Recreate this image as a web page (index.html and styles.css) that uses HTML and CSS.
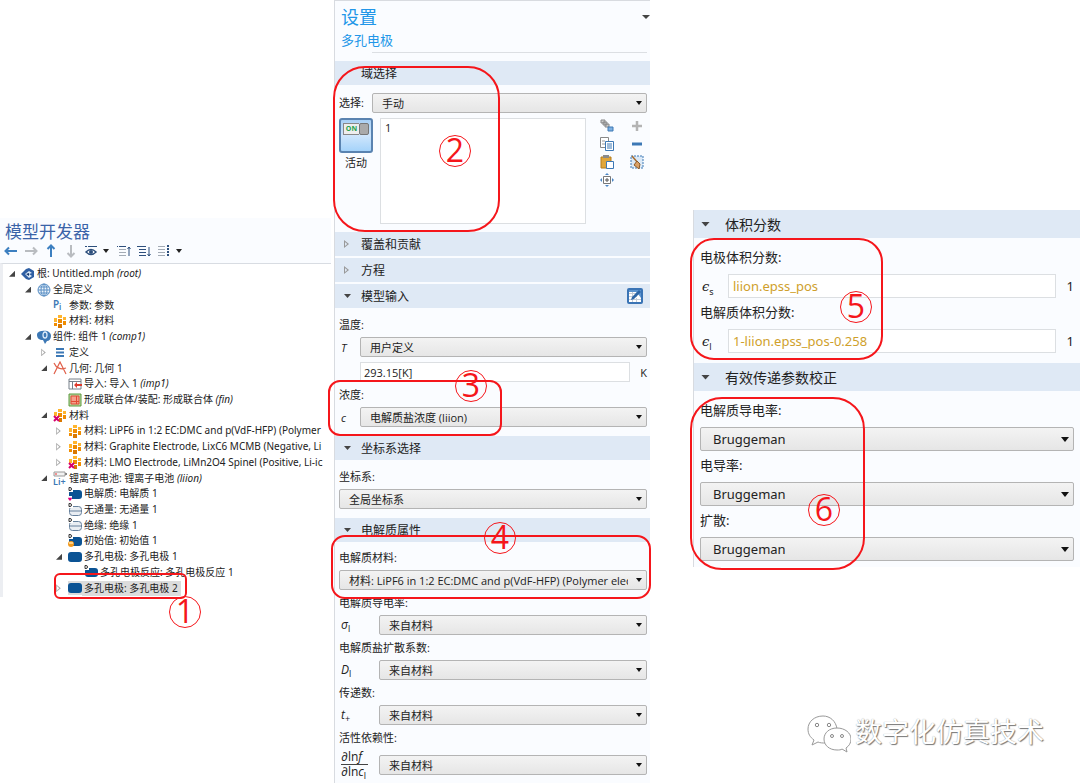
FILE: index.html
```
<!DOCTYPE html>
<html lang="zh-CN">
<head>
  <meta charset="UTF-8" />
  <meta name="viewport" content="width=device-width, initial-scale=1.0"/>
  <title>多孔电极 - 模型开发器</title>
  <link rel="stylesheet" href="styles.css">
</head>
<body>
  <!-- icon definitions -->
  <svg class="defs" aria-hidden="true">
    <symbol id="i-root" viewBox="0 0 14 14">
      <path d="M0 7L5 2l3-1 5 3v6l-5 3-3-1z" fill="#2f5fa3"/>
      <path d="M4 7l4-3 3 2-3 1 3 2-3 2z" fill="#dbe9f7"/>
      <path d="M5 7l3-1v3z" fill="#17386e"/>
    </symbol>
    <symbol id="i-globe" viewBox="0 0 14 14">
      <g fill="none" stroke="#5b8fc4" stroke-width="1">
        <circle cx="7" cy="7" r="6" fill="#eef5fc"/>
        <ellipse cx="7" cy="7" rx="3" ry="6"/>
        <path d="M7 1v12M1 7h12M2 4h10M2 10h10"/>
      </g>
    </symbol>
    <symbol id="i-param" viewBox="0 0 14 14">
      <text x="0" y="10" font-size="10" font-weight="600" fill="#3c78b5">P</text>
      <text x="6" y="12" font-size="8" font-weight="600" fill="#3c78b5">i</text>
    </symbol>
    <symbol id="i-mat" viewBox="0 0 14 14">
      <path d="M5 1h4v3H5zM1 4h3v4H1zM10 3h3v3h-3z" fill="#ffb52e"/>
      <path d="M5 5h4v4H5zM10 7h3v4h-3zM1 9h3v3H1z" fill="#f08c00"/>
      <path d="M5 10h4v4H5z" fill="#d97800"/>
    </symbol>
    <symbol id="i-matx" viewBox="0 0 14 14">
      <use href="#i-mat"/>
      <path d="M0 8h6v6H0z" fill="#fff"/>
      <path d="M1 8l5 5M6 8l-5 5" stroke="#d6006c" stroke-width="2"/>
    </symbol>
    <symbol id="i-comp" viewBox="0 0 14 14">
      <path d="M0 5c0-3 3-4 5-4 5-1 9 1 9 5 0 3-2 5-4 5l-2 3-2-4C2 10 0 8 0 5z" fill="#3c78b5"/>
      <ellipse cx="8" cy="5" rx="2" ry="3" fill="none" stroke="#dcebfa" stroke-width="1.3"/>
    </symbol>
    <symbol id="i-def" viewBox="0 0 14 14">
      <path d="M3 4h8M3 7.500h8M3 11h8" stroke="#3c78b5" stroke-width="2"/>
    </symbol>
    <symbol id="i-geom" viewBox="0 0 14 14">
      <path d="M1 2c2 5 7 7 12 5M1 13L7 1l6 12" fill="none" stroke="#e0604a" stroke-width="1.200"/>
    </symbol>
    <symbol id="i-import" viewBox="0 0 14 14">
      <path d="M1 2h12v10H1zM1 4.500h12M4.500 4v8" fill="#fff" stroke="#77808a"/>
      <path d="M6 8l3-3v2h5v2H9v2z" fill="#df3b2d"/>
    </symbol>
    <symbol id="i-union" viewBox="0 0 14 14">
      <path d="M1 1h12v12H1z" fill="#b9d7a2" stroke="#5e9a3f"/>
      <path d="M3 3h8v8H3z" fill="#f5a08c" stroke="#e24b36"/>
      <path d="M3 8.500h8M8.500 3v8" stroke="#e24b36"/>
    </symbol>
    <symbol id="i-li" viewBox="0 0 14 14">
      <path d="M1 1h11v4H1z" fill="#f2f2f2" stroke="#9a9a9a"/>
      <path d="M12 2h2v2h-2z" fill="#888"/>
      <path d="M2 3h2" stroke="#e33"/>
      <text x="0" y="14" font-size="9" font-weight="600" fill="#3c78b5">Li+</text>
    </symbol>
    <symbol id="i-dom" viewBox="0 0 14 14">
      <rect x="0" y="2" width="14" height="10" rx="3" fill="#0b5394"/>
    </symbol>
    <symbol id="i-domd" viewBox="0 0 14 14">
      <rect x="1" y="3" width="13" height="9" rx="3" fill="#0b5394"/>
      <path d="M0 0h5v5H0z" fill="#fff"/>
      <path d="M1 .500h1q1.500 0 1.500 1.500T2 3.500H1z" fill="none" stroke="#333"/>
    </symbol>
    <symbol id="i-domel" viewBox="0 0 14 14">
      <use href="#i-domd"/>
      <path d="M0 9h4v5H0z" fill="#fff"/>
      <path d="M0 11q1-1 2 0 1-1 2 0 0 1-2 3-2-2-2-3z" fill="#e0007a"/>
    </symbol>
    <symbol id="i-domin" viewBox="0 0 14 14">
      <use href="#i-domd"/>
      <circle cx="3" cy="10" r="3" fill="#f29a1f"/>
      <path d="M1 8h4v2H1z" fill="#ffd083"/>
    </symbol>
    <symbol id="i-bnd" viewBox="0 0 14 14">
      <rect x="1.500" y="3.500" width="12" height="9" rx="3" fill="#e9edf2" stroke="#66809c"/>
      <path d="M2 8h11" stroke="#66809c"/>
      <path d="M0 0h5v5H0z" fill="#fff"/>
      <path d="M1 .500h1q1.500 0 1.500 1.500T2 3.500H1z" fill="none" stroke="#333"/>
    </symbol>
    <symbol id="i-arrow" viewBox="0 0 14 14">
      <path d="M1 7h12M5 3.500L1.500 7 5 10.500" fill="none" stroke="currentColor" stroke-width="2"/>
    </symbol>
  </svg>

  <main class="board">
    <div class="col col-tree">
      <section class="builder">
        <h1>模型开发器</h1>
        <div class="toolbar">
          <button type="button" aria-label="后退"><svg class="blue"><use href="#i-arrow"/></svg></button>
          <button type="button" aria-label="前进"><svg class="grey flip"><use href="#i-arrow"/></svg></button>
          <button type="button" aria-label="上移"><svg class="blue up"><use href="#i-arrow"/></svg></button>
          <button type="button" aria-label="下移"><svg class="grey down"><use href="#i-arrow"/></svg></button>
          <button type="button" class="drop" aria-label="显示">
            <svg viewBox="0 0 14 14"><path d="M1 2.500h2M4 2.500h9" stroke="#2d4f7c"/><path d="M2 8q5-5 10 0-5 5-10 0z" fill="#fff" stroke="#2d4f7c" stroke-width="1.500"/><circle cx="7" cy="8" r="2" fill="#2d4f7c"/></svg>
          </button>
          <button type="button" aria-label="全部折叠">
            <svg viewBox="0 0 14 14"><path d="M0 2.500h9" stroke="#2d4f7c" stroke-dasharray="1 1 7"/><path d="M2 5.500h7M2 8.500h7M2 11.500h7" stroke="#a3abb5"/><path d="M12 12V3M10.500 5L12 3l1.500 2" fill="none" stroke="#2d4f7c"/></svg>
          </button>
          <button type="button" aria-label="全部展开">
            <svg viewBox="0 0 14 14"><path d="M0 2.500h9M2 5.500h7M2 8.500h7M2 11.500h7" stroke="#2d4f7c"/><path d="M12 3v9M10.500 10l1.500 2 1.500-2" fill="none" stroke="#2d4f7c"/></svg>
          </button>
          <button type="button" class="drop" aria-label="节点文本">
            <svg viewBox="0 0 14 14"><path d="M1 2.500h7M1 5.500h7M1 8.500h7M1 11.500h7" stroke="#a3abb5"/><path d="M11 1v12" stroke="#2d4f7c" stroke-width="2" stroke-dasharray="2 1"/></svg>
          </button>
        </div>
        <ul class="tree">
          <li class="l0 open"><svg><use href="#i-root"/></svg><span>根: Untitled.mph <i>(root)</i></span></li>
          <li class="l1 open"><svg><use href="#i-globe"/></svg><span>全局定义</span></li>
          <li class="l2"><svg><use href="#i-param"/></svg><span>参数: 参数</span></li>
          <li class="l2"><svg><use href="#i-mat"/></svg><span>材料: 材料</span></li>
          <li class="l1 open"><svg><use href="#i-comp"/></svg><span>组件: 组件 1 <i>(comp1)</i></span></li>
          <li class="l2 shut"><svg><use href="#i-def"/></svg><span>定义</span></li>
          <li class="l2 open"><svg><use href="#i-geom"/></svg><span>几何: 几何 1</span></li>
          <li class="l3"><svg><use href="#i-import"/></svg><span>导入: 导入 1 <i>(imp1)</i></span></li>
          <li class="l3"><svg><use href="#i-union"/></svg><span>形成联合体/装配: 形成联合体 <i>(fin)</i></span></li>
          <li class="l2 open"><svg><use href="#i-matx"/></svg><span>材料</span></li>
          <li class="l3 shut"><svg><use href="#i-mat"/></svg><span>材料: LiPF6 in 1:2 EC:DMC and p(VdF-HFP) (Polymer</span></li>
          <li class="l3 shut"><svg><use href="#i-mat"/></svg><span>材料: Graphite Electrode, LixC6 MCMB (Negative, Li</span></li>
          <li class="l3 shut"><svg><use href="#i-matx"/></svg><span>材料: LMO Electrode, LiMn2O4 Spinel (Positive, Li-ic</span></li>
          <li class="l2 open"><svg><use href="#i-li"/></svg><span>锂离子电池: 锂离子电池 <i>(liion)</i></span></li>
          <li class="l3"><svg><use href="#i-domel"/></svg><span>电解质: 电解质 1</span></li>
          <li class="l3"><svg><use href="#i-bnd"/></svg><span>无通量: 无通量 1</span></li>
          <li class="l3"><svg><use href="#i-bnd"/></svg><span>绝缘: 绝缘 1</span></li>
          <li class="l3"><svg><use href="#i-domin"/></svg><span>初始值: 初始值 1</span></li>
          <li class="l3 open"><svg><use href="#i-dom"/></svg><span>多孔电极: 多孔电极 1</span></li>
          <li class="l4"><svg><use href="#i-domd"/></svg><span>多孔电极反应: 多孔电极反应 1</span></li>
          <li class="l3 shut selected"><svg><use href="#i-dom"/></svg><span>多孔电极: 多孔电极 2</span></li>
        </ul>
      </section>
      <div class="mark mark1"></div>
      <div class="num num1">1</div>
    </div>

    <div class="col col-settings">
      <section class="settings">
        <header>
          <h2>设置</h2>
          <p>多孔电极</p>
        </header>

        <h3>域选择</h3>
        <div class="domain">
          <label for="sel">选择:</label>
          <select id="sel"><option>手动</option></select>
          <div class="active">
            <button type="button" id="on" aria-label="活动"><span>ON</span><b></b></button>
            <label for="on">活动</label>
          </div>
          <textarea aria-label="域">1</textarea>
          <div class="tools">
            <button type="button" aria-label="创建选择"><svg viewBox="0 0 14 14"><path d="M1 1h4v3H1zM3 3h4v3H3zM5 5h4v3H5z" fill="#ccc" stroke="#888"/><path d="M8 8h5v4H8z" fill="#7fb0e0" stroke="#3c78b5"/></svg></button>
            <button type="button" aria-label="添加"><svg viewBox="0 0 14 14"><path d="M7 2v10M2 7h10" stroke="#b4b4b4" stroke-width="2.500"/></svg></button>
            <button type="button" aria-label="复制"><svg viewBox="0 0 14 14"><path d="M.5.500h8v10h-8z" fill="#fff" stroke="#888"/><path d="M2 4h3M2 7h3" stroke="#999"/><path d="M5.500 4.500h8v9h-8z" fill="#fff" stroke="#3c78b5"/><path d="M7 7h5M7 9h5M7 11h5" stroke="#3c78b5"/></svg></button>
            <button type="button" aria-label="移除"><svg viewBox="0 0 14 14"><path d="M2 7h10" stroke="#3c78b5" stroke-width="3"/></svg></button>
            <button type="button" aria-label="粘贴"><svg viewBox="0 0 14 14"><path d="M1 2h10v11H1z" fill="#e0a63a" stroke="#b57d1c"/><path d="M3 0h6v3H3z" fill="#8a8a8a"/><path d="M6.500 6.500h7v7h-7z" fill="#fff" stroke="#3c78b5"/></svg></button>
            <button type="button" aria-label="清除选择"><svg viewBox="0 0 14 14"><path d="M1 1h12v12H1z" fill="#dbe9f7" stroke="#3c78b5" stroke-dasharray="2 1"/><path d="M2 1l6 7" stroke="#a66b2e" stroke-width="1.500"/><path d="M7 6l3 3-1 5-5-4z" fill="#d9a066" stroke="#8d5a28"/></svg></button>
            <button type="button" aria-label="缩放到选择"><svg viewBox="0 0 14 14"><path d="M3.500 3.500h7v7h-7z" fill="#fff" stroke="#777"/><path d="M7 5v4M5 7h4" stroke="#555"/><path d="M7 0l2 2H5zM7 14l2-2H5zM0 7l2-2v4zM14 7l-2-2v4z" fill="#4a86c5"/></svg></button>
          </div>
        </div>

        <h3 class="shut">覆盖和贡献</h3>
        <h3 class="shut">方程</h3>
        <h3 class="open">模型输入
          <button type="button" class="edit" aria-label="编辑"><svg viewBox="0 0 16 16"><rect x="1" y="1" width="14" height="14" rx="1" fill="#fff" stroke="#3a74b5" stroke-width="2"/><path d="M2 5.500h8M2 8.500h8M2 11.500h12M5.500 4v10M9.500 10v4" stroke="#c5cdd8"/><path d="M2 2h12v8L11 6 9 4H2z" fill="#5b93cf"/><path d="M4 12l1-3 7-7 2 2-7 7z" fill="#2d65a5"/></svg></button>
        </h3>
        <div class="fields">
          <label for="temp">温度:</label>
          <div class="row"><i class="sym">T</i><select id="temp"><option>用户定义</option></select></div>
          <div class="row"><span class="sym"></span><input type="text" value="293.15[K]" aria-label="温度值"><span class="unit">K</span></div>
          <label for="conc">浓度:</label>
          <div class="row"><i class="sym">c</i><select id="conc"><option>电解质盐浓度 (liion)</option></select></div>
        </div>

        <h3 class="open">坐标系选择</h3>
        <div class="fields">
          <label for="coord">坐标系:</label>
          <div class="row"><select id="coord"><option>全局坐标系</option></select></div>
        </div>

        <h3 class="open">电解质属性</h3>
        <div class="fields wide">
          <label for="mat">电解质材料:</label>
          <div class="row"><select id="mat"><option>材料: LiPF6 in 1:2 EC:DMC and p(VdF-HFP) (Polymer electrolyte)</option></select></div>
          <label for="sigma">电解质导电率:</label>
          <div class="row"><span class="sym"><i>σ</i><sub>l</sub></span><select id="sigma"><option>来自材料</option></select></div>
          <label for="diff">电解质盐扩散系数:</label>
          <div class="row"><span class="sym"><i>D</i><sub>l</sub></span><select id="diff"><option>来自材料</option></select></div>
          <label for="trans">传递数:</label>
          <div class="row"><span class="sym"><i>t</i><sub>+</sub></span><select id="trans"><option>来自材料</option></select></div>
          <label for="act">活性依赖性:</label>
          <div class="row"><span class="sym frac"><span>∂ln<i>f</i></span><span>∂ln<i>c</i><sub>l</sub></span></span><select id="act"><option>来自材料</option></select></div>
        </div>
      </section>
      <div class="mark mark2"></div>
      <div class="mark mark3"></div>
      <div class="mark mark4"></div>
      <div class="num num2">2</div>
      <div class="num num3">3</div>
      <div class="num num4">4</div>
    </div>

    <div class="col col-props">
      <section class="settings large">
        <h3 class="open">体积分数</h3>
        <div class="fields">
          <label for="epss">电极体积分数:</label>
          <div class="row"><span class="sym"><i>ϵ</i><sub>s</sub></span><input type="text" id="epss" value="liion.epss_pos"><span class="unit">1</span></div>
          <label for="epsl">电解质体积分数:</label>
          <div class="row"><span class="sym"><i>ϵ</i><sub>l</sub></span><input type="text" id="epsl" value="1-liion.epss_pos-0.258"><span class="unit">1</span></div>
        </div>
        <h3 class="open">有效传递参数校正</h3>
        <div class="fields">
          <label for="b1">电解质导电率:</label>
          <div class="row"><select id="b1"><option>Bruggeman</option></select></div>
          <label for="b2">电导率:</label>
          <div class="row"><select id="b2"><option>Bruggeman</option></select></div>
          <label for="b3">扩散:</label>
          <div class="row"><select id="b3"><option>Bruggeman</option></select></div>
        </div>
      </section>
      <div class="mark mark5"></div>
      <div class="mark mark6"></div>
      <div class="num num5">5</div>
      <div class="num num6">6</div>

      <footer>
        <svg viewBox="0 0 44 38"><g fill="#fff" stroke="#999"><path d="M16 1C7 1 1 7 1 14c0 5 2 8 6 11l-2 5 6-3c2 1 5 1 7 1l12-14C29 6 23 1 16 1z"/><path d="M30 13c-8 0-13 5-13 11s5 11 13 11c2 0 4 0 5-1l5 3-1-4c3-2 5-5 5-9 0-6-6-11-14-11z"/></g><g fill="#fff" stroke="#888"><circle cx="10" cy="10" r="1.700"/><circle cx="22" cy="10" r="1.700"/><circle cx="25" cy="21" r="1.500"/><circle cx="35" cy="21" r="1.500"/></g></svg>
        <span>数字化仿真技术</span>
      </footer>
    </div>
  </main>
</body>
</html>
```
FILE: styles.css
```
* {
  margin: 0;
  padding: 0;
  box-sizing: border-box;
}
body {
  font-family: "Open Sans", "Noto Sans CJK SC", sans-serif;
  font-size: 11px;
  color: #222;
  background: #fff;
}
button, input, select, textarea {
  font: inherit;
  color: inherit;
}
button {
  border: 0;
  background: none;
}
svg {
  display: block;
}
.defs {
  display: none;
}

.board {
  display: grid;
  grid-template-columns: 334fr 359fr 387fr;
  min-height: 100vh;
}
.col {
  position: relative;
  min-width: 0;
}
.col-tree {
  padding: 218px 3px 0 0;
}
.col-settings {
  padding-right: 43px;
}
.col-props {
  display: flex;
  flex-direction: column;
  padding-top: 210px;
}

/* model builder */
.builder {
  background: #fafcff;
}
.builder h1 {
  padding: 1px 5px 0;
  font-size: 17px;
  line-height: 25px;
  font-weight: 400;
  color: #3a63a8;
}
.toolbar {
  display: flex;
  gap: 6px;
  height: 19px;
  padding-left: 4px;
}
.toolbar button {
  display: flex;
  align-items: center;
  height: 14px;
}
.toolbar svg {
  width: 14px;
  height: 14px;
}
.toolbar .drop::after {
  content: "";
  margin: 0 2px 0 5px;
  border: 3px solid transparent;
  border-top: 4px solid #222;
  border-bottom: 0;
}
.blue { color: #3c7fc0; }
.grey { color: #b9bcc0; }
.flip { transform: rotate(180deg); }
.up { transform: rotate(90deg); }
.down { transform: rotate(-90deg); }

.tree {
  display: grid;
  grid-auto-rows: 1fr;
  min-height: 334px;
  padding: 2px 0 1px;
  overflow: hidden;
  list-style: none;
  font-family: "Noto Sans", "Noto Sans CJK SC", sans-serif;
  font-size: 10px;
  line-height: 15px;
  background: #fff;
  border-top: 1px solid #d8dce2;
  border-left: 3px solid #eceef2;
}
.tree li {
  display: flex;
  align-items: center;
  min-width: 0;
  white-space: nowrap;
}
.tree li::before {
  content: "";
  flex: none;
  width: 6px;
  height: 6px;
  margin: 0 6px;
}
.tree .open::before {
  background: #444;
  clip-path: polygon(100% 0, 100% 100%, 0 100%);
}
.tree .shut::before {
  height: 8px;
  background: linear-gradient(to right, #bbb, #999);
  clip-path: polygon(0 0, 80% 50%, 0 100%, 0 15%, 15% 25%, 15% 75%, 55% 50%, 0 15%);
}
.tree svg {
  flex: none;
  width: 14px;
  height: 14px;
}
.tree span {
  padding: 0 3px 0 2px;
}
.tree .l1 { padding-left: 16px; }
.tree .l2 { padding-left: 32px; }
.tree .l3 { padding-left: 47px; }
.tree .l4 { padding-left: 63px; }
.tree .selected svg,
.tree .selected span {
  background: #dcdcdc;
}

/* settings */
.settings {
  background: #fafcff;
  border-left: 1px solid #d8dbe0;
}
.settings header {
  position: relative;
  height: 61px;
  padding: 4px 6px 0;
  border-top: 1px solid #d8dbe0;
  color: #2196e8;
}
.settings header::before {
  content: "";
  position: absolute;
  top: 14px;
  right: 0;
  border: 4px solid transparent;
  border-top-color: #444;
  border-bottom: 0;
}
.settings header::after {
  content: "";
  position: absolute;
  left: 37px;
  right: 3px;
  bottom: 8px;
  border-top: 1px solid #dcdfe3;
}
.settings h2 {
  font-size: 18px;
  line-height: 24px;
  font-weight: 400;
}
.settings p {
  font-size: 13px;
  line-height: 22px;
}
.settings h3 {
  display: flex;
  align-items: center;
  height: 24px;
  padding: 0 7px 0 9px;
  font-size: 12px;
  font-weight: 400;
  background: #dfe9f5;
}
.settings h3 + h3 {
  margin-top: 2px;
}
.settings h3::before {
  content: "";
  width: 7px;
  height: 4px;
  margin-right: 10px;
}
.settings .open::before {
  background: #444;
  clip-path: polygon(0 0, 100% 0, 50% 100%);
}
.settings .shut::before {
  width: 5px;
  height: 8px;
  margin-right: 12px;
  background: #999;
  clip-path: polygon(0 0, 100% 50%, 0 100%, 0 15%, 20% 25%, 20% 75%, 65% 50%, 0 15%);
}
.edit {
  width: 16px;
  margin-left: auto;
}

.domain {
  display: grid;
  grid-template-columns: 34px minmax(0, 1fr) 54px;
  gap: 5px 7px;
  padding: 8px 3px 8px 4px;
}
.domain > label {
  line-height: 20px;
  white-space: nowrap;
}
.domain > select {
  grid-column: 2 / 4;
  margin-left: -8px;
}
.active {
  text-align: center;
}
.active button {
  display: flex;
  align-items: flex-start;
  width: 34px;
  height: 35px;
  padding: 3px 2px;
  background: linear-gradient(#a8d0f5, #cfe6fc 50%, #a5d3fa);
  border: 2px solid #5a83b0;
  border-radius: 3px;
}
.active button span {
  flex: 1;
  height: 12px;
  font-size: 7px;
  font-weight: 700;
  line-height: 10px;
  color: #26a04a;
  background: #eee;
  border: 1px solid #888;
  border-right: 0;
}
.active b {
  width: 10px;
  height: 12px;
  background: #aaa;
  border: 1px solid #777;
  border-radius: 2px;
}
.active label {
  line-height: 20px;
}
textarea {
  height: 106px;
  padding: 1px 4px;
  resize: none;
  background: #fff;
  border: 1px solid #dcdfe2;
}
.tools {
  display: grid;
  grid-template-columns: 14px 14px;
  grid-auto-rows: 14px;
  gap: 4px 16px;
  padding: 1px 0 0 7px;
}
.tools svg {
  width: 14px;
  height: 14px;
}

.fields {
  display: flex;
  flex-direction: column;
  padding: 9px 3px 9px 4px;
}
.fields label {
  height: 16px;
  margin-bottom: 4px;
  line-height: 16px;
}
.row {
  display: flex;
  align-items: center;
}
.row + label,
.row + .row {
  margin-top: 5px;
}
.sym {
  flex: none;
  width: 21px;
  padding-left: 2px;
}
.sym sub {
  font-size: 9px;
  line-height: 1;
}
.fields.wide {
  padding: 8px 3px 3px 4px;
}
.wide .sym {
  width: 40px;
  font-size: 12px;
}
.sym.frac {
  display: flex;
  flex-direction: column;
  padding-right: 11px;
  line-height: 14px;
}
.frac span:first-child {
  border-bottom: 1px solid #444;
}
.row select,
.row input {
  flex: 1;
  min-width: 0;
}
select {
  height: 20px;
  padding: 0 18px 0 9px;
  appearance: none;
  text-overflow: clip;
  background: url("data:image/svg+xml,%3Csvg xmlns='http://www.w3.org/2000/svg' width='6' height='4'%3E%3Cpath d='M0 0h6L3 4z' fill='%23111'/%3E%3C/svg%3E") no-repeat right 4px center, linear-gradient(#f3f3f3, #e6e6e6);
  border: 1px solid #b4b4b4;
  border-radius: 2px;
}
input {
  height: 20px;
  padding: 0 3px;
  background: #fff;
  border: 1px solid #dcdfe2;
}
.unit {
  width: 17px;
  text-align: right;
}

/* enlarged sections on the right */
.large {
  font-family: "Noto Sans", "Noto Sans CJK SC", sans-serif;
}
.large h3 {
  height: 28px;
  padding-left: 7px;
  font-size: 14px;
}
.large h3::before {
  width: 9px;
  height: 5px;
  margin-right: 15px;
}
.large .fields {
  padding: 10px 6px 10px 6px;
  font-size: 13px;
}
.large .fields:last-child {
  padding-bottom: 6px;
}
.large label {
  height: 20px;
  margin-bottom: 6px;
  line-height: 18px;
}
.large .sym {
  width: 28px;
}
.large .sym i {
  font-family: "DejaVu Serif", serif;
}
.large select,
.large input {
  height: 24px;
}
.large select {
  padding-left: 12px;
  background-size: 8px 5px, auto;
}
.large input {
  padding-left: 4px;
  color: #cf9f2c;
}
.large .unit {
  width: 18px;
}

/* callouts */
.mark {
  position: absolute;
  border: 2px solid #f5161b;
  pointer-events: none;
}
.mark1 { left: 54px; top: 573px; width: 133px; height: 26px; border-radius: 6px; }
.mark2 { left: -1px; top: 66px; width: 167px; height: 166px; border-radius: 32px; }
.mark3 { left: -6px; top: 380px; width: 174px; height: 56px; border-radius: 12px; }
.mark4 { left: -3px; top: 535px; width: 320px; height: 64px; border-radius: 14px; }
.mark5 { left: -3px; top: 238px; width: 193px; height: 122px; border-radius: 24px; }
.mark6 { left: -3px; top: 397px; width: 175px; height: 173px; border-radius: 32px; }
.num {
  position: absolute;
  width: 32px;
  height: 32px;
  border: 1px solid #f5161b;
  border-radius: 50%;
  font-family: "Open Sans", sans-serif;
  font-size: 32px;
  line-height: 28px;
  text-align: center;
  color: #f5161b;
}
.num1 { left: 169px; top: 596px; }
.num2 { left: 105px; top: 135px; }
.num3 { left: 121px; top: 370px; }
.num4 { left: 150px; top: 522px; }
.num5 { left: 147px; top: 291px; }
.num6 { left: 115px; top: 494px; }

footer {
  display: flex;
  align-items: center;
  gap: 4px;
  margin-top: auto;
  padding: 0 36px 30px 0;
  justify-content: flex-end;
}
footer svg {
  width: 44px;
  height: 38px;
}
footer span {
  font-size: 27px;
  line-height: 34px;
  padding-bottom: 4px;
  color: #fff;
  text-shadow: 1px 1px 1px #777, 0 0 1px #999;
}
```
